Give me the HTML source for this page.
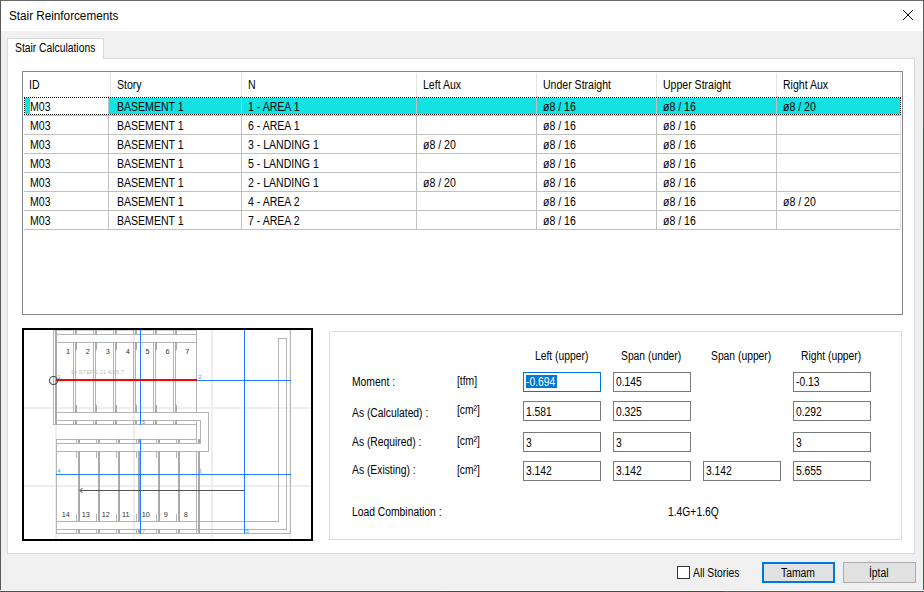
<!DOCTYPE html>
<html>
<head>
<meta charset="utf-8">
<title>Stair Reinforcements</title>
<style>
*{box-sizing:border-box;margin:0;padding:0}
html,body{width:924px;height:592px;overflow:hidden;background:#f0f0f0}
body{position:relative;font-family:"Liberation Sans",sans-serif;font-size:12px;color:#000;line-height:14px}
.abs{position:absolute}
.t{position:absolute;white-space:nowrap;font-size:12px;line-height:14px;height:14px;transform:scaleX(0.878);transform-origin:0 0}
.f{transform:scaleX(0.86)}
#bt{left:0;top:0;width:924px;height:1px;background:#6a6a6a}
#bl{left:0;top:0;width:1px;height:592px;background:#595959}
#br{left:923px;top:0;width:1px;height:592px;background:linear-gradient(#5a5a5a 0,#5a5a5a 128px,#1e6b33 128px,#1e6b33 100%)}
#bb{left:0;top:590px;width:924px;height:2px;background:linear-gradient(#fbfbfb 0,#fbfbfb 1px,transparent 1px),linear-gradient(90deg,#4d4d4d 0,#4d4d4d 443px,#17692b 443px,#17692b 724px,#5a5a5a 724px)}
#titlebar{left:1px;top:1px;width:922px;height:30px;background:#fff}
#title{left:9px;top:9px;transform:scaleX(0.975)}
#panel{left:7px;top:58px;width:908px;height:496px;background:#fff;border:1px solid #d9d9d9}
#tab{left:7px;top:38px;width:97px;height:21px;background:#fff;border:1px solid #d9d9d9;border-bottom:none}
#list{left:22px;top:71px;width:881px;height:244px;background:#fff;border:1px solid #828790}
.hd{position:absolute;top:73px;width:1px;height:23px;background:#e5e5e5}
.gv{position:absolute;top:96px;width:1px;height:134px;background:#c0c0c0}
.gh{position:absolute;left:24px;width:877px;height:1px;background:#c0c0c0}
#sel{left:25px;top:98px;width:875px;height:16px;background:#14e1e1}
#selw{left:30px;top:98px;width:79px;height:16px;background:#fff}
#focus{left:24px;top:97px;width:877px;height:18px;border:1px dotted #000}
#pic{left:22px;top:328px;width:291px;height:213px;border:2px solid #000;background:#fff}
#grp{left:329px;top:331px;width:573px;height:209px;border:1px solid #dcdcdc;background:#fff}
.in{position:absolute;width:78px;height:20px;border:1px solid #7a7a7a;background:#fff}
.in.f0{border-color:#0078d7}
#hl{left:526px;top:375px;width:31px;height:13px;background:#0078d7}
.btn{position:absolute;top:562px;width:73px;height:21px;background:#e1e1e1;border:1px solid #adadad}
.btn.d{border:2px solid #0078d7}
#chk{left:677px;top:566px;width:13px;height:13px;background:#fff;border:1px solid #333}
</style>
</head>
<body>
<div class="abs" id="titlebar"></div>
<div class="t" id="title">Stair Reinforcements</div>
<svg class="abs" style="left:903px;top:10px" width="10" height="10" viewBox="0 0 10 10" shape-rendering="crispEdges"><path d="M0 0 L10 10 M10 0 L0 10" stroke="#000" stroke-width="1" fill="none"/></svg>
<div class="abs" id="panel"></div>
<div class="abs" id="tab"></div>
<div class="t f" style="left:15px;top:41px">Stair Calculations</div>
<div class="abs" id="list"></div>
<div class="hd" style="left:110px"></div>
<div class="hd" style="left:241px"></div>
<div class="hd" style="left:416px"></div>
<div class="hd" style="left:536px"></div>
<div class="hd" style="left:656px"></div>
<div class="hd" style="left:776px"></div>
<div class="hd" style="left:900px"></div>
<div class="t" style="left:29px;top:78px">ID</div>
<div class="t" style="left:117px;top:78px">Story</div>
<div class="t" style="left:248px;top:78px">N</div>
<div class="t" style="left:423px;top:78px">Left Aux</div>
<div class="t" style="left:543px;top:78px">Under Straight</div>
<div class="t" style="left:663px;top:78px">Upper Straight</div>
<div class="t" style="left:783px;top:78px">Right Aux</div>
<div class="abs" id="sel"></div><div class="abs" id="selw"></div>
<div class="gh" style="top:115px"></div>
<div class="gh" style="top:134px"></div>
<div class="gh" style="top:153px"></div>
<div class="gh" style="top:172px"></div>
<div class="gh" style="top:191px"></div>
<div class="gh" style="top:210px"></div>
<div class="gh" style="top:229px"></div>
<div class="gv" style="left:108px"></div>
<div class="gv" style="left:241px"></div>
<div class="gv" style="left:416px"></div>
<div class="gv" style="left:536px"></div>
<div class="gv" style="left:656px"></div>
<div class="gv" style="left:776px"></div>
<div class="gv" style="left:900px;background:#e0e0e0"></div>
<div class="abs" id="focus"></div>
<div class="t" style="left:30px;top:100px">M03</div>
<div class="t" style="left:117px;top:100px">BASEMENT 1</div>
<div class="t" style="left:248px;top:100px">1 - AREA 1</div>
<div class="t" style="left:543px;top:100px">ø8 / 16</div>
<div class="t" style="left:663px;top:100px">ø8 / 16</div>
<div class="t" style="left:783px;top:100px">ø8 / 20</div>
<div class="t" style="left:30px;top:119px">M03</div>
<div class="t" style="left:117px;top:119px">BASEMENT 1</div>
<div class="t" style="left:248px;top:119px">6 - AREA 1</div>
<div class="t" style="left:543px;top:119px">ø8 / 16</div>
<div class="t" style="left:663px;top:119px">ø8 / 16</div>
<div class="t" style="left:30px;top:138px">M03</div>
<div class="t" style="left:117px;top:138px">BASEMENT 1</div>
<div class="t" style="left:248px;top:138px">3 - LANDING 1</div>
<div class="t" style="left:423px;top:138px">ø8 / 20</div>
<div class="t" style="left:543px;top:138px">ø8 / 16</div>
<div class="t" style="left:663px;top:138px">ø8 / 16</div>
<div class="t" style="left:30px;top:157px">M03</div>
<div class="t" style="left:117px;top:157px">BASEMENT 1</div>
<div class="t" style="left:248px;top:157px">5 - LANDING 1</div>
<div class="t" style="left:543px;top:157px">ø8 / 16</div>
<div class="t" style="left:663px;top:157px">ø8 / 16</div>
<div class="t" style="left:30px;top:176px">M03</div>
<div class="t" style="left:117px;top:176px">BASEMENT 1</div>
<div class="t" style="left:248px;top:176px">2 - LANDING 1</div>
<div class="t" style="left:423px;top:176px">ø8 / 20</div>
<div class="t" style="left:543px;top:176px">ø8 / 16</div>
<div class="t" style="left:663px;top:176px">ø8 / 16</div>
<div class="t" style="left:30px;top:195px">M03</div>
<div class="t" style="left:117px;top:195px">BASEMENT 1</div>
<div class="t" style="left:248px;top:195px">4 - AREA 2</div>
<div class="t" style="left:543px;top:195px">ø8 / 16</div>
<div class="t" style="left:663px;top:195px">ø8 / 16</div>
<div class="t" style="left:783px;top:195px">ø8 / 20</div>
<div class="t" style="left:30px;top:214px">M03</div>
<div class="t" style="left:117px;top:214px">BASEMENT 1</div>
<div class="t" style="left:248px;top:214px">7 - AREA 2</div>
<div class="t" style="left:543px;top:214px">ø8 / 16</div>
<div class="t" style="left:663px;top:214px">ø8 / 16</div>
<div class="abs" id="pic"></div>
<svg class="abs" style="left:0;top:0" width="924" height="592" viewBox="0 0 924 592" shape-rendering="crispEdges" font-family="Liberation Sans, sans-serif">
<g><rect x="55" y="330" width="2" height="209" fill="#eeeeee"/>
<rect x="133" y="330" width="2" height="209" fill="#eeeeee"/>
<rect x="211" y="330" width="2" height="209" fill="#eeeeee"/>
<rect x="289" y="330" width="2" height="209" fill="#eeeeee"/>
<rect x="24" y="407" width="287" height="2" fill="#eeeeee"/>
<rect x="24" y="485" width="287" height="2" fill="#eeeeee"/>
<rect x="53" y="330" width="144" height="1" fill="#d0d0d0"/>
<rect x="53" y="330" width="1" height="95" fill="#b4b4b4"/>
<rect x="55" y="330" width="2" height="95" fill="#a9a9a9"/>
<rect x="56" y="334" width="141" height="1" fill="#b4b4b4"/>
<rect x="56" y="342" width="141" height="1" fill="#b4b4b4"/>
<rect x="56" y="412" width="153" height="1" fill="#b4b4b4"/>
<rect x="56" y="420" width="145" height="1" fill="#b4b4b4"/>
<rect x="53" y="424" width="144" height="1" fill="#b4b4b4"/>
<rect x="73" y="330" width="1" height="4" fill="#b4b4b4"/>
<rect x="75" y="330" width="1" height="4" fill="#b4b4b4"/>
<rect x="73" y="342" width="1" height="70" fill="#b4b4b4"/>
<rect x="75" y="342" width="1" height="70" fill="#b4b4b4"/>
<rect x="73" y="420" width="1" height="4" fill="#b4b4b4"/>
<rect x="75" y="420" width="1" height="4" fill="#b4b4b4"/>
<rect x="75" y="342" width="2" height="8" fill="#a9a9a9"/>
<rect x="75" y="405" width="2" height="7" fill="#a9a9a9"/>
<rect x="75" y="330" width="2" height="4" fill="#a9a9a9"/>
<rect x="75" y="420" width="2" height="4" fill="#a9a9a9"/>
<rect x="93" y="330" width="1" height="4" fill="#b4b4b4"/>
<rect x="95" y="330" width="1" height="4" fill="#b4b4b4"/>
<rect x="93" y="342" width="1" height="70" fill="#b4b4b4"/>
<rect x="95" y="342" width="1" height="70" fill="#b4b4b4"/>
<rect x="93" y="420" width="1" height="4" fill="#b4b4b4"/>
<rect x="95" y="420" width="1" height="4" fill="#b4b4b4"/>
<rect x="95" y="342" width="2" height="8" fill="#a9a9a9"/>
<rect x="95" y="405" width="2" height="7" fill="#a9a9a9"/>
<rect x="95" y="330" width="2" height="4" fill="#a9a9a9"/>
<rect x="95" y="420" width="2" height="4" fill="#a9a9a9"/>
<rect x="113" y="330" width="1" height="4" fill="#b4b4b4"/>
<rect x="115" y="330" width="1" height="4" fill="#b4b4b4"/>
<rect x="113" y="342" width="1" height="70" fill="#b4b4b4"/>
<rect x="115" y="342" width="1" height="70" fill="#b4b4b4"/>
<rect x="113" y="420" width="1" height="4" fill="#b4b4b4"/>
<rect x="115" y="420" width="1" height="4" fill="#b4b4b4"/>
<rect x="115" y="342" width="2" height="8" fill="#a9a9a9"/>
<rect x="115" y="405" width="2" height="7" fill="#a9a9a9"/>
<rect x="115" y="330" width="2" height="4" fill="#a9a9a9"/>
<rect x="115" y="420" width="2" height="4" fill="#a9a9a9"/>
<rect x="133" y="330" width="1" height="4" fill="#b4b4b4"/>
<rect x="135" y="330" width="1" height="4" fill="#b4b4b4"/>
<rect x="133" y="342" width="1" height="70" fill="#b4b4b4"/>
<rect x="135" y="342" width="1" height="70" fill="#b4b4b4"/>
<rect x="133" y="420" width="1" height="4" fill="#b4b4b4"/>
<rect x="135" y="420" width="1" height="4" fill="#b4b4b4"/>
<rect x="135" y="342" width="2" height="8" fill="#a9a9a9"/>
<rect x="135" y="405" width="2" height="7" fill="#a9a9a9"/>
<rect x="135" y="330" width="2" height="4" fill="#a9a9a9"/>
<rect x="135" y="420" width="2" height="4" fill="#a9a9a9"/>
<rect x="153" y="330" width="1" height="4" fill="#b4b4b4"/>
<rect x="155" y="330" width="1" height="4" fill="#b4b4b4"/>
<rect x="153" y="342" width="1" height="70" fill="#b4b4b4"/>
<rect x="155" y="342" width="1" height="70" fill="#b4b4b4"/>
<rect x="153" y="420" width="1" height="4" fill="#b4b4b4"/>
<rect x="155" y="420" width="1" height="4" fill="#b4b4b4"/>
<rect x="155" y="342" width="2" height="8" fill="#a9a9a9"/>
<rect x="155" y="405" width="2" height="7" fill="#a9a9a9"/>
<rect x="155" y="330" width="2" height="4" fill="#a9a9a9"/>
<rect x="155" y="420" width="2" height="4" fill="#a9a9a9"/>
<rect x="173" y="330" width="1" height="4" fill="#b4b4b4"/>
<rect x="175" y="330" width="1" height="4" fill="#b4b4b4"/>
<rect x="173" y="342" width="1" height="70" fill="#b4b4b4"/>
<rect x="175" y="342" width="1" height="70" fill="#b4b4b4"/>
<rect x="173" y="420" width="1" height="4" fill="#b4b4b4"/>
<rect x="175" y="420" width="1" height="4" fill="#b4b4b4"/>
<rect x="175" y="342" width="2" height="8" fill="#a9a9a9"/>
<rect x="175" y="405" width="2" height="7" fill="#a9a9a9"/>
<rect x="175" y="330" width="2" height="4" fill="#a9a9a9"/>
<rect x="175" y="420" width="2" height="4" fill="#a9a9a9"/>
<rect x="196" y="330" width="1" height="82" fill="#b4b4b4"/>
<rect x="208" y="412" width="1" height="40" fill="#b4b4b4"/>
<rect x="56" y="451" width="153" height="1" fill="#b4b4b4"/>
<rect x="200" y="420" width="1" height="24" fill="#b4b4b4"/>
<rect x="196" y="420" width="1" height="24" fill="#b4b4b4"/>
<rect x="56" y="443" width="145" height="1" fill="#b4b4b4"/>
<rect x="198" y="439" width="2" height="4" fill="#a9a9a9"/>
<rect x="56" y="439" width="141" height="1" fill="#b4b4b4"/>
<rect x="56" y="439" width="1" height="95" fill="#b4b4b4"/>
<rect x="56" y="521" width="223" height="1" fill="#b4b4b4"/>
<rect x="56" y="529" width="231" height="1" fill="#b4b4b4"/>
<rect x="56" y="533" width="235" height="1" fill="#b4b4b4"/>
<rect x="78" y="439" width="2" height="4" fill="#a9a9a9"/>
<rect x="78" y="451" width="2" height="70" fill="#a9a9a9"/>
<rect x="78" y="529" width="2" height="4" fill="#a9a9a9"/>
<rect x="76" y="439" width="1" height="4" fill="#b4b4b4"/>
<rect x="76" y="451" width="1" height="7" fill="#b4b4b4"/>
<rect x="76" y="514" width="1" height="7" fill="#b4b4b4"/>
<rect x="76" y="529" width="1" height="4" fill="#b4b4b4"/>
<rect x="98" y="439" width="2" height="4" fill="#a9a9a9"/>
<rect x="98" y="451" width="2" height="70" fill="#a9a9a9"/>
<rect x="98" y="529" width="2" height="4" fill="#a9a9a9"/>
<rect x="96" y="439" width="1" height="4" fill="#b4b4b4"/>
<rect x="96" y="451" width="1" height="7" fill="#b4b4b4"/>
<rect x="96" y="514" width="1" height="7" fill="#b4b4b4"/>
<rect x="96" y="529" width="1" height="4" fill="#b4b4b4"/>
<rect x="118" y="439" width="2" height="4" fill="#a9a9a9"/>
<rect x="118" y="451" width="2" height="70" fill="#a9a9a9"/>
<rect x="118" y="529" width="2" height="4" fill="#a9a9a9"/>
<rect x="116" y="439" width="1" height="4" fill="#b4b4b4"/>
<rect x="116" y="451" width="1" height="7" fill="#b4b4b4"/>
<rect x="116" y="514" width="1" height="7" fill="#b4b4b4"/>
<rect x="116" y="529" width="1" height="4" fill="#b4b4b4"/>
<rect x="138" y="439" width="2" height="4" fill="#a9a9a9"/>
<rect x="138" y="451" width="2" height="70" fill="#a9a9a9"/>
<rect x="138" y="529" width="2" height="4" fill="#a9a9a9"/>
<rect x="136" y="439" width="1" height="4" fill="#b4b4b4"/>
<rect x="136" y="451" width="1" height="7" fill="#b4b4b4"/>
<rect x="136" y="514" width="1" height="7" fill="#b4b4b4"/>
<rect x="136" y="529" width="1" height="4" fill="#b4b4b4"/>
<rect x="158" y="439" width="2" height="4" fill="#a9a9a9"/>
<rect x="158" y="451" width="2" height="70" fill="#a9a9a9"/>
<rect x="158" y="529" width="2" height="4" fill="#a9a9a9"/>
<rect x="156" y="439" width="1" height="4" fill="#b4b4b4"/>
<rect x="156" y="451" width="1" height="7" fill="#b4b4b4"/>
<rect x="156" y="514" width="1" height="7" fill="#b4b4b4"/>
<rect x="156" y="529" width="1" height="4" fill="#b4b4b4"/>
<rect x="178" y="439" width="2" height="4" fill="#a9a9a9"/>
<rect x="178" y="451" width="2" height="70" fill="#a9a9a9"/>
<rect x="178" y="529" width="2" height="4" fill="#a9a9a9"/>
<rect x="176" y="439" width="1" height="4" fill="#b4b4b4"/>
<rect x="176" y="451" width="1" height="7" fill="#b4b4b4"/>
<rect x="176" y="514" width="1" height="7" fill="#b4b4b4"/>
<rect x="176" y="529" width="1" height="4" fill="#b4b4b4"/>
<rect x="196" y="451" width="1" height="82" fill="#b4b4b4"/>
<rect x="198" y="451" width="2" height="82" fill="#a9a9a9"/>
<rect x="290" y="330" width="1" height="204" fill="#b4b4b4"/>
<rect x="278" y="338" width="1" height="184" fill="#b4b4b4"/>
<rect x="286" y="338" width="1" height="192" fill="#b4b4b4"/>
<rect x="278" y="338" width="9" height="1" fill="#b4b4b4"/>
<rect x="140" y="330" width="1" height="95" fill="#1f7cff"/>
<rect x="140" y="439" width="1" height="95" fill="#1f7cff"/>
<rect x="244" y="330" width="1" height="204" fill="#1f7cff"/>
<rect x="197" y="380" width="94" height="1" fill="#1f7cff"/>
<rect x="56" y="474" width="235" height="1" fill="#1f7cff"/>
<rect x="80" y="490" width="164" height="1" fill="#555"/>
<path d="M82.5 488 L80 490.5 L82.5 493" stroke="#444" stroke-width="1" fill="none" shape-rendering="auto"/>
<rect x="56" y="379" width="141" height="2" fill="#ff0000"/>
<circle cx="53.5" cy="380.5" r="4" stroke="#444" stroke-width="1.1" fill="none" shape-rendering="auto"/></g>
<g shape-rendering="auto"><text x="68.0" y="353.6" text-anchor="middle" font-size="7.3" fill="#333">1</text>
<text x="87.9" y="353.6" text-anchor="middle" font-size="7.3" fill="#333">2</text>
<text x="107.8" y="353.6" text-anchor="middle" font-size="7.3" fill="#333">3</text>
<text x="127.7" y="353.6" text-anchor="middle" font-size="7.3" fill="#333">4</text>
<text x="147.6" y="353.6" text-anchor="middle" font-size="7.3" fill="#333">5</text>
<text x="167.5" y="353.6" text-anchor="middle" font-size="7.3" fill="#333">6</text>
<text x="187.4" y="353.6" text-anchor="middle" font-size="7.3" fill="#333">7</text>
<text x="65.8" y="517.2" text-anchor="middle" font-size="7.3" fill="#333">14</text>
<text x="85.8" y="517.2" text-anchor="middle" font-size="7.3" fill="#333">13</text>
<text x="105.8" y="517.2" text-anchor="middle" font-size="7.3" fill="#333">12</text>
<text x="125.8" y="517.2" text-anchor="middle" font-size="7.3" fill="#333">11</text>
<text x="145.8" y="517.2" text-anchor="middle" font-size="7.3" fill="#333">10</text>
<text x="165.8" y="517.2" text-anchor="middle" font-size="7.3" fill="#333">9</text>
<text x="185.8" y="517.2" text-anchor="middle" font-size="7.3" fill="#333">8</text>
<text x="70.5" y="373.6" font-size="5.8" fill="#bbbbbb" textLength="53.5" lengthAdjust="spacingAndGlyphs">14 STEPS 21.4/25.7</text>
<text x="57.3" y="379" font-size="6" fill="#4d95ff">1</text>
<text x="198.3" y="379" font-size="6" fill="#4d95ff">2</text>
<text x="141.8" y="424" font-size="6" fill="#4d95ff">5</text>
<text x="57.3" y="473.3" font-size="6" fill="#4d95ff">4</text>
<text x="198.3" y="473.3" font-size="6" fill="#4d95ff">3</text>
<text x="141.8" y="532.6" font-size="6" fill="#4d95ff">7</text>
<text x="245.6" y="532.6" font-size="6" fill="#4d95ff">5</text></g>
</svg>
<div class="abs" id="grp"></div>
<div class="t f" style="left:535px;top:349px">Left (upper)</div>
<div class="t f" style="left:621px;top:349px">Span (under)</div>
<div class="t f" style="left:711px;top:349px">Span (upper)</div>
<div class="t f" style="left:801px;top:349px">Right (upper)</div>
<div class="t f" style="left:352px;top:375px">Moment :</div>
<div class="t f" style="left:457px;top:374px">[tfm]</div>
<div class="in f0" style="left:523px;top:372px"></div>
<div class="abs" id="hl"></div>
<div class="t f" style="left:526px;top:375px;color:#fff">-0.694</div>
<div class="in" style="left:613px;top:372px"></div>
<div class="t f" style="left:616px;top:375px">0.145</div>
<div class="in" style="left:793px;top:372px"></div>
<div class="t f" style="left:796px;top:375px">-0.13</div>
<div class="t f" style="left:352px;top:406px">As (Calculated) :</div>
<div class="t f" style="left:457px;top:403px">[cm²]</div>
<div class="in" style="left:523px;top:401px"></div>
<div class="t f" style="left:526px;top:405px">1.581</div>
<div class="in" style="left:613px;top:401px"></div>
<div class="t f" style="left:616px;top:405px">0.325</div>
<div class="in" style="left:793px;top:401px"></div>
<div class="t f" style="left:796px;top:405px">0.292</div>
<div class="t f" style="left:352px;top:435px">As (Required) :</div>
<div class="t f" style="left:457px;top:434px">[cm²]</div>
<div class="in" style="left:523px;top:432px"></div>
<div class="t f" style="left:526px;top:436px">3</div>
<div class="in" style="left:613px;top:432px"></div>
<div class="t f" style="left:616px;top:436px">3</div>
<div class="in" style="left:793px;top:432px"></div>
<div class="t f" style="left:796px;top:436px">3</div>
<div class="t f" style="left:352px;top:463px">As (Existing) :</div>
<div class="t f" style="left:457px;top:463px">[cm²]</div>
<div class="in" style="left:523px;top:461px"></div>
<div class="t f" style="left:526px;top:464px">3.142</div>
<div class="in" style="left:613px;top:461px"></div>
<div class="t f" style="left:616px;top:464px">3.142</div>
<div class="in" style="left:703px;top:461px"></div>
<div class="t f" style="left:706px;top:464px">3.142</div>
<div class="in" style="left:793px;top:461px"></div>
<div class="t f" style="left:796px;top:464px">5.655</div>
<div class="t f" style="left:352px;top:505px">Load Combination :</div>
<div class="t f" style="left:668px;top:505px">1.4G+1.6Q</div>
<div class="abs" id="chk"></div>
<div class="t f" style="left:693px;top:566px">All Stories</div>
<div class="btn d" style="left:762px"></div>
<div class="t f" style="left:781px;top:566px">Tamam</div>
<div class="btn" style="left:843px"></div>
<div class="t f" style="left:869px;top:566px">İptal</div>
<div class="abs" id="bt"></div><div class="abs" id="bl"></div><div class="abs" id="br"></div><div class="abs" id="bb"></div>
</body>
</html>
